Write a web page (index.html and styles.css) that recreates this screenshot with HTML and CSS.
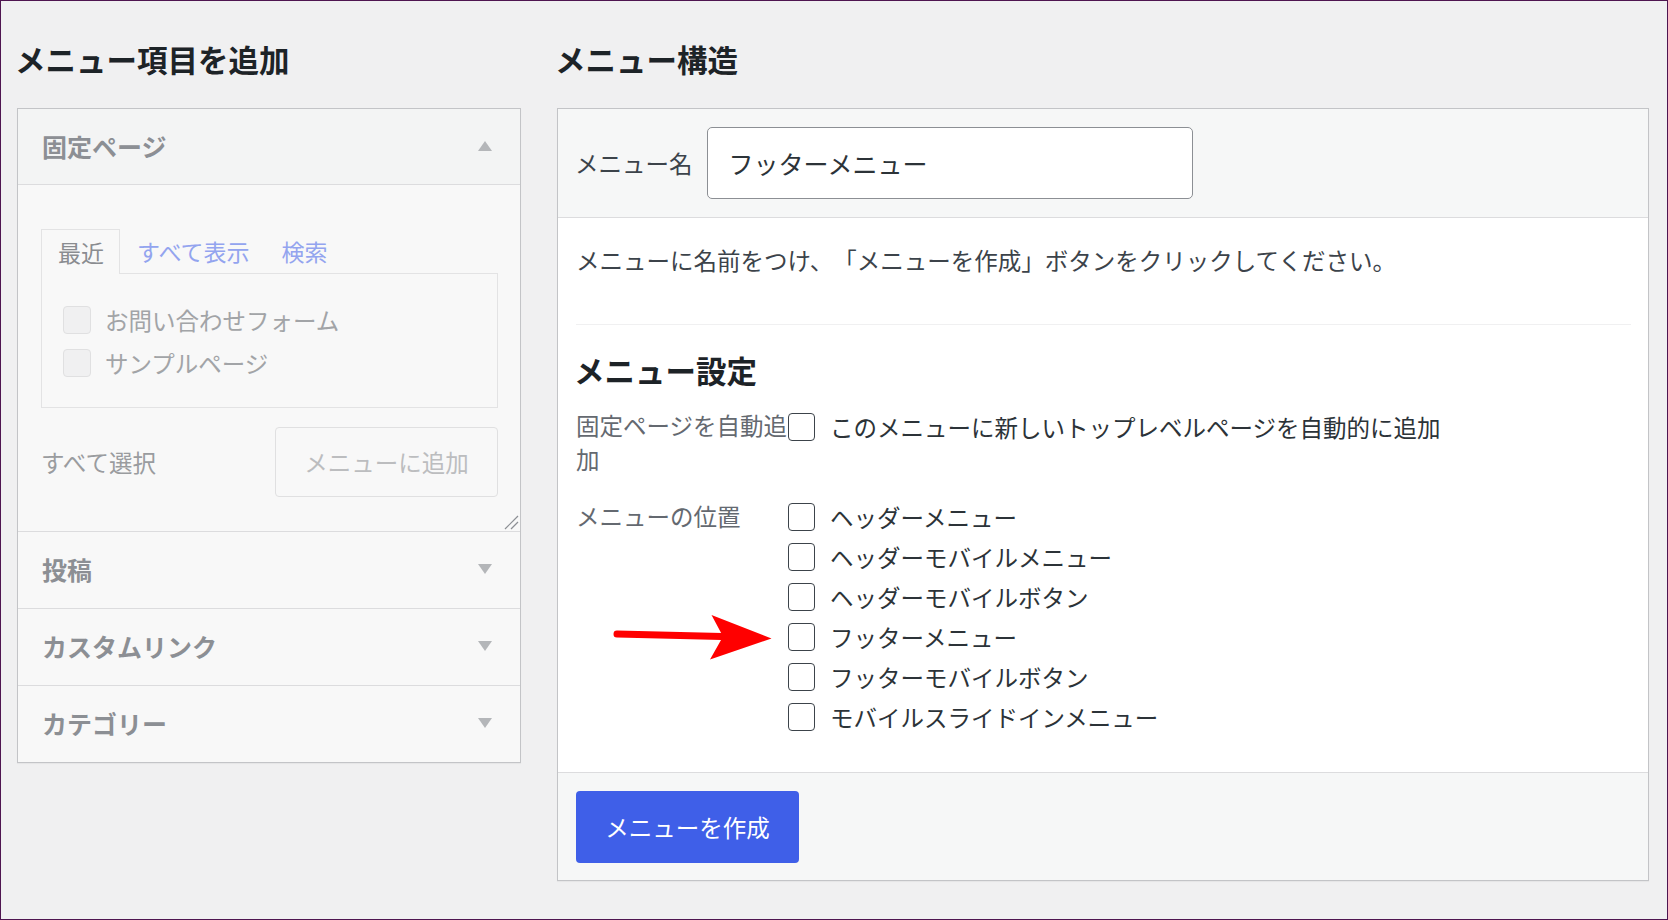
FILE: index.html
```html
<!DOCTYPE html>
<html lang="ja">

<head>
    <meta charset="UTF-8">
    <meta name="viewport" content="width=device-width, initial-scale=1.0">
    <title>メニュー</title>
    <link rel="stylesheet" href="styles.css">
</head>

<body>

    <div class="wrap">
        <div class="col-side">
            <h2 class="col-title">メニュー項目を追加</h2>
            <div class="side-box">
                <div class="acc-section open">
                    <div class="acc-title">固定ページ<span class="arrow up"></span></div>
                    <div class="acc-content">
                        <ul class="tabs">
                            <li class="tab active">最近</li>
                            <li class="tab link first">すべて表示</li>
                            <li class="tab link">検索</li>
                        </ul>
                        <div class="tabs-panel">
                            <label class="item"><span class="fake-check"></span>お問い合わせフォーム</label>
                            <label class="item"><span class="fake-check"></span>サンプルページ</label>
                        </div>
                        <div class="button-controls">
                            <span>すべて選択</span>
                            <button class="add-btn" disabled>メニューに追加</button>
                        </div>
                        <svg class="resize" width="16" height="16" viewBox="0 0 16 16">
                            <line x1="2" y1="15" x2="15" y2="2" stroke="#8c8f94" stroke-width="1.2" />
                            <line x1="8" y1="15" x2="15" y2="8" stroke="#8c8f94" stroke-width="1.2" />
                        </svg>
                    </div>
                </div>
                <div class="acc-section">
                    <div class="acc-title">投稿<span class="arrow down"></span></div>
                </div>
                <div class="acc-section">
                    <div class="acc-title">カスタムリンク<span class="arrow down"></span></div>
                </div>
                <div class="acc-section">
                    <div class="acc-title">カテゴリー<span class="arrow down"></span></div>
                </div>
            </div>
        </div>

        <div class="col-main">
            <h2 class="col-title">メニュー構造</h2>
            <div class="menu-box">
                <div class="menu-head">
                    <label class="name-label" for="menu-name">メニュー名</label>
                    <input type="text" id="menu-name" class="name-input" value="フッターメニュー">
                </div>
                <div class="menu-body">
                    <p class="note">メニューに名前をつけ、「メニューを作成」ボタンをクリックしてください。</p>
                    <div class="divider"></div>
                    <h3 class="settings-title">メニュー設定</h3>

                    <div class="setting-row first">
                        <div class="setting-label">固定ページを自動追加</div>
                        <div class="setting-options">
                            <label class="option"><input type="checkbox">このメニューに新しいトップレベルページを自動的に追加</label>
                        </div>
                    </div>

                    <div class="setting-row">
                        <div class="setting-label">メニューの位置</div>
                        <div class="setting-options">
                            <label class="option"><input type="checkbox">ヘッダーメニュー</label>
                            <label class="option"><input type="checkbox">ヘッダーモバイルメニュー</label>
                            <label class="option"><input type="checkbox">ヘッダーモバイルボタン</label>
                            <label class="option"><input type="checkbox">フッターメニュー</label>
                            <label class="option"><input type="checkbox">フッターモバイルボタン</label>
                            <label class="option"><input type="checkbox">モバイルスライドインメニュー</label>
                        </div>
                    </div>

                    <!-- annotation arrow -->
                    <svg class="pointer" width="165" height="52" viewBox="0 0 165 52">
                        <line x1="7" y1="22" x2="112" y2="24.5" stroke="#ff0000" stroke-width="7" stroke-linecap="round" />
                        <polygon points="101.5,3 161.5,26.5 100,47.5 113,24.5" fill="#ff0000" />
                    </svg>
                </div>
                <div class="menu-foot">
                    <button class="primary-btn">メニューを作成</button>
                </div>
            </div>
        </div>
    </div>

</body>

</html>
```

FILE: styles.css
```css
html {
    height: 100%;
}

body {
    margin: 0;
    height: 920px;
    box-sizing: border-box;
    border: 1px solid #4e1550;
    background-color: #f0f0f1;
    font-family: "Noto Sans CJK JP", "Noto Sans", sans-serif;
    color: #3c434a;
    overflow: hidden;
    text-spacing-trim: space-all;
}

.wrap {
    display: flex;
    gap: 36px;
    padding: 38px 18px 0 16px;
}

.col-side {
    width: 504px;
    flex-shrink: 0;
}

.col-main {
    flex: 1;
}

.col-title {
    margin: 0 0 29px -2px;
    font-size: 30.5px;
    line-height: 40px;
    font-weight: bold;
    color: #1d2327;
}

/* left column (disabled look) */
.side-box {
    border: 1px solid #c3c4c7;
    background-color: #f8f8f8;
    box-shadow: 0 1px 1px rgba(0, 0, 0, 0.04);
}

.acc-section {
    border-bottom: 1px solid #dcdcde;
}

.acc-section:last-child {
    border-bottom: none;
}

.acc-title {
    display: flex;
    align-items: center;
    height: 76px;
    box-sizing: border-box;
    padding: 0 28px 2px 24px;
    font-size: 25px;
    font-weight: bold;
    color: #8c8f94;
}

.open .acc-title {
    background-color: #f3f4f4;
    border-bottom: 1px solid #dcdcde;
}

.arrow {
    margin-left: auto;
    width: 0;
    height: 0;
    border-left: 7px solid transparent;
    border-right: 7px solid transparent;
}

.arrow.up {
    border-bottom: 10px solid #b4b6b9;
}

.arrow.down {
    border-top: 10px solid #b4b6b9;
}

.acc-content {
    position: relative;
    padding: 44px 22px 34px 23px;
}

.tabs {
    display: flex;
    list-style: none;
    margin: 0 0 -1px;
    padding: 0;
}

.tab {
    height: 45px;
    line-height: 44px;
    font-size: 23px;
    box-sizing: border-box;
}

.tab.active {
    position: relative;
    z-index: 1;
    padding: 0 15px 0 16px;
    border: 1px solid #e3e3e4;
    border-bottom: none;
    background-color: #f8f8f8;
    color: #8a8c90;
}

.tab.link {
    padding: 0 16px;
    color: #93a4ef;
}

.tab.first {
    margin-left: 1px;
}

.tabs-panel {
    border: 1px solid #e3e3e4;
    padding: 24px 20px 23px 21px;
}

.item {
    display: flex;
    align-items: center;
    height: 43px;
    font-size: 23.5px;
    color: #a2a4a7;
}

.fake-check {
    width: 28px;
    height: 28px;
    box-sizing: border-box;
    margin-right: 14px;
    border: 1px solid #e0e0e1;
    border-radius: 4px;
    background-color: #f0f0f1;
}

.button-controls {
    display: flex;
    align-items: center;
    margin-top: 19px;
    font-size: 23.5px;
    color: #9a9c9f;
}

.add-btn {
    margin-left: auto;
    width: 223px;
    height: 70px;
    border: 1px solid #e0e0e1;
    border-radius: 4px;
    background-color: #f8f8f8;
    font-family: inherit;
    font-size: 23.5px;
    color: #bcbdbf;
}

.resize {
    position: absolute;
    right: 1px;
    bottom: 1px;
}

/* right column */
.menu-box {
    border: 1px solid #c3c4c7;
    background-color: #fff;
    box-shadow: 0 1px 1px rgba(0, 0, 0, 0.04);
}

.menu-head {
    display: flex;
    align-items: center;
    padding: 18px 18px 18px 17px;
    background-color: #f6f7f7;
    border-bottom: 1px solid #dcdcde;
}

.name-label {
    font-size: 23.5px;
    margin-right: 14px;
    color: #3c434a;
}

.name-input {
    width: 486px;
    height: 72px;
    box-sizing: border-box;
    padding: 0 21px;
    border: 1px solid #8c8f94;
    border-radius: 5px;
    background-color: #fff;
    font-family: inherit;
    font-size: 25px;
    color: #2c3338;
    outline: none;
}

.menu-body {
    position: relative;
    padding: 25px 17px 35px 18px;
}

.note {
    margin: 0;
    font-size: 23.5px;
    line-height: 34px;
}

.divider {
    margin-top: 47px;
    border-top: 1px solid #f0f0f1;
}

.settings-title {
    margin: 25px 0 18px -2px;
    font-size: 30.5px;
    line-height: 40px;
    font-weight: bold;
    color: #1d2327;
}

.setting-row {
    display: flex;
    align-items: flex-start;
    margin-top: 21px;
}

.setting-row.first {
    margin-top: 0;
}

.setting-label {
    width: 212px;
    flex-shrink: 0;
    font-size: 23.5px;
    line-height: 34px;
    color: #646970;
}

.setting-row:not(.first) .setting-label {
    padding-top: 2px;
}

.option {
    display: flex;
    align-items: center;
    height: 40px;
    font-size: 23.5px;
    color: #2c3338;
}

.setting-row.first .option {
    margin-top: -1px;
}

.option input {
    appearance: none;
    -webkit-appearance: none;
    width: 27px;
    height: 28px;
    margin: 0 15px 0 0;
    box-sizing: border-box;
    border: 1.5px solid #3c434a;
    border-radius: 4px;
    background-color: #fff;
}

.pointer {
    position: absolute;
    left: 52px;
    top: 394px;
}

.menu-foot {
    padding: 18px 18px 17px;
    background-color: #f6f7f7;
    border-top: 1px solid #dcdcde;
}

.primary-btn {
    width: 223px;
    height: 72px;
    border: none;
    border-radius: 4px;
    background-color: #3f5fe8;
    color: #fff;
    font-family: inherit;
    font-size: 23.5px;
}
```
